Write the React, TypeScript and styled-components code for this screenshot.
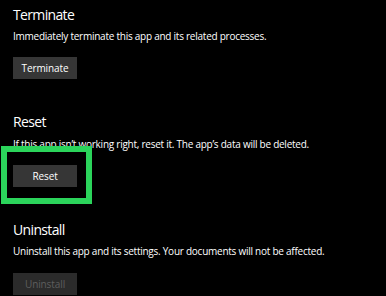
import React from "react";
import styled, { createGlobalStyle } from "styled-components";

const Global = createGlobalStyle`
  html, body { margin: 0; padding: 0; background: #000; }
  body { font-family: "Open Sans", "Noto Sans", sans-serif; color: #fff; }
`;

const Page = styled.div`
  width: 386px;
  height: 296px;
  background: #000;
  padding: 4.6px 13px 0;
  box-sizing: border-box;
  display: flex;
  flex-direction: column;
  gap: 33.4px;
  overflow: hidden;
`;

const Section = styled.section`
  display: flex;
  flex-direction: column;
  align-items: flex-start;
`;

const Heading = styled.h2`
  margin: 0;
  font-size: 14px;
  line-height: 20px;
  font-weight: 400;
  letter-spacing: -0.65px;
  color: #fff;
`;

const Desc = styled.p`
  margin: 3.3px 0 0;
  font-size: 10px;
  line-height: 16px;
  letter-spacing: -0.25px;
  color: #fff;
  white-space: nowrap;
`;

const ButtonWrap = styled.div`
  position: relative;
  margin-top: 13.1px;
`;

const Button = styled.button<{ $disabled?: boolean }>`
  width: 64px;
  height: 22px;
  border: none;
  padding: 0;
  font-family: inherit;
  font-size: 10px;
  letter-spacing: -0.1px;
  background: ${(p) => (p.$disabled ? "#2b2b2b" : "#363636")};
  color: ${(p) => (p.$disabled ? "#5e5e5e" : "#fff")};
  display: block;
`;

const Highlight = styled.div`
  position: absolute;
  left: -12px;
  top: -19px;
  width: 91px;
  height: 58px;
  box-sizing: border-box;
  border: 6px solid #2bd45b;
  pointer-events: none;
`;

export default function App() {
  return (
    <>
      <Global />
      <Page>
        <Section>
          <Heading>Terminate</Heading>
          <Desc>Immediately terminate this app and its related processes.</Desc>
          <ButtonWrap>
            <Button>Terminate</Button>
          </ButtonWrap>
        </Section>
        <Section>
          <Heading>Reset</Heading>
          <Desc>If this app isn’t working right, reset it. The app’s data will be deleted.</Desc>
          <ButtonWrap>
            <Button>Reset</Button>
            <Highlight />
          </ButtonWrap>
        </Section>
        <Section>
          <Heading>Uninstall</Heading>
          <Desc>Uninstall this app and its settings. Your documents will not be affected.</Desc>
          <ButtonWrap>
            <Button $disabled>Uninstall</Button>
          </ButtonWrap>
        </Section>
      </Page>
    </>
  );
}
